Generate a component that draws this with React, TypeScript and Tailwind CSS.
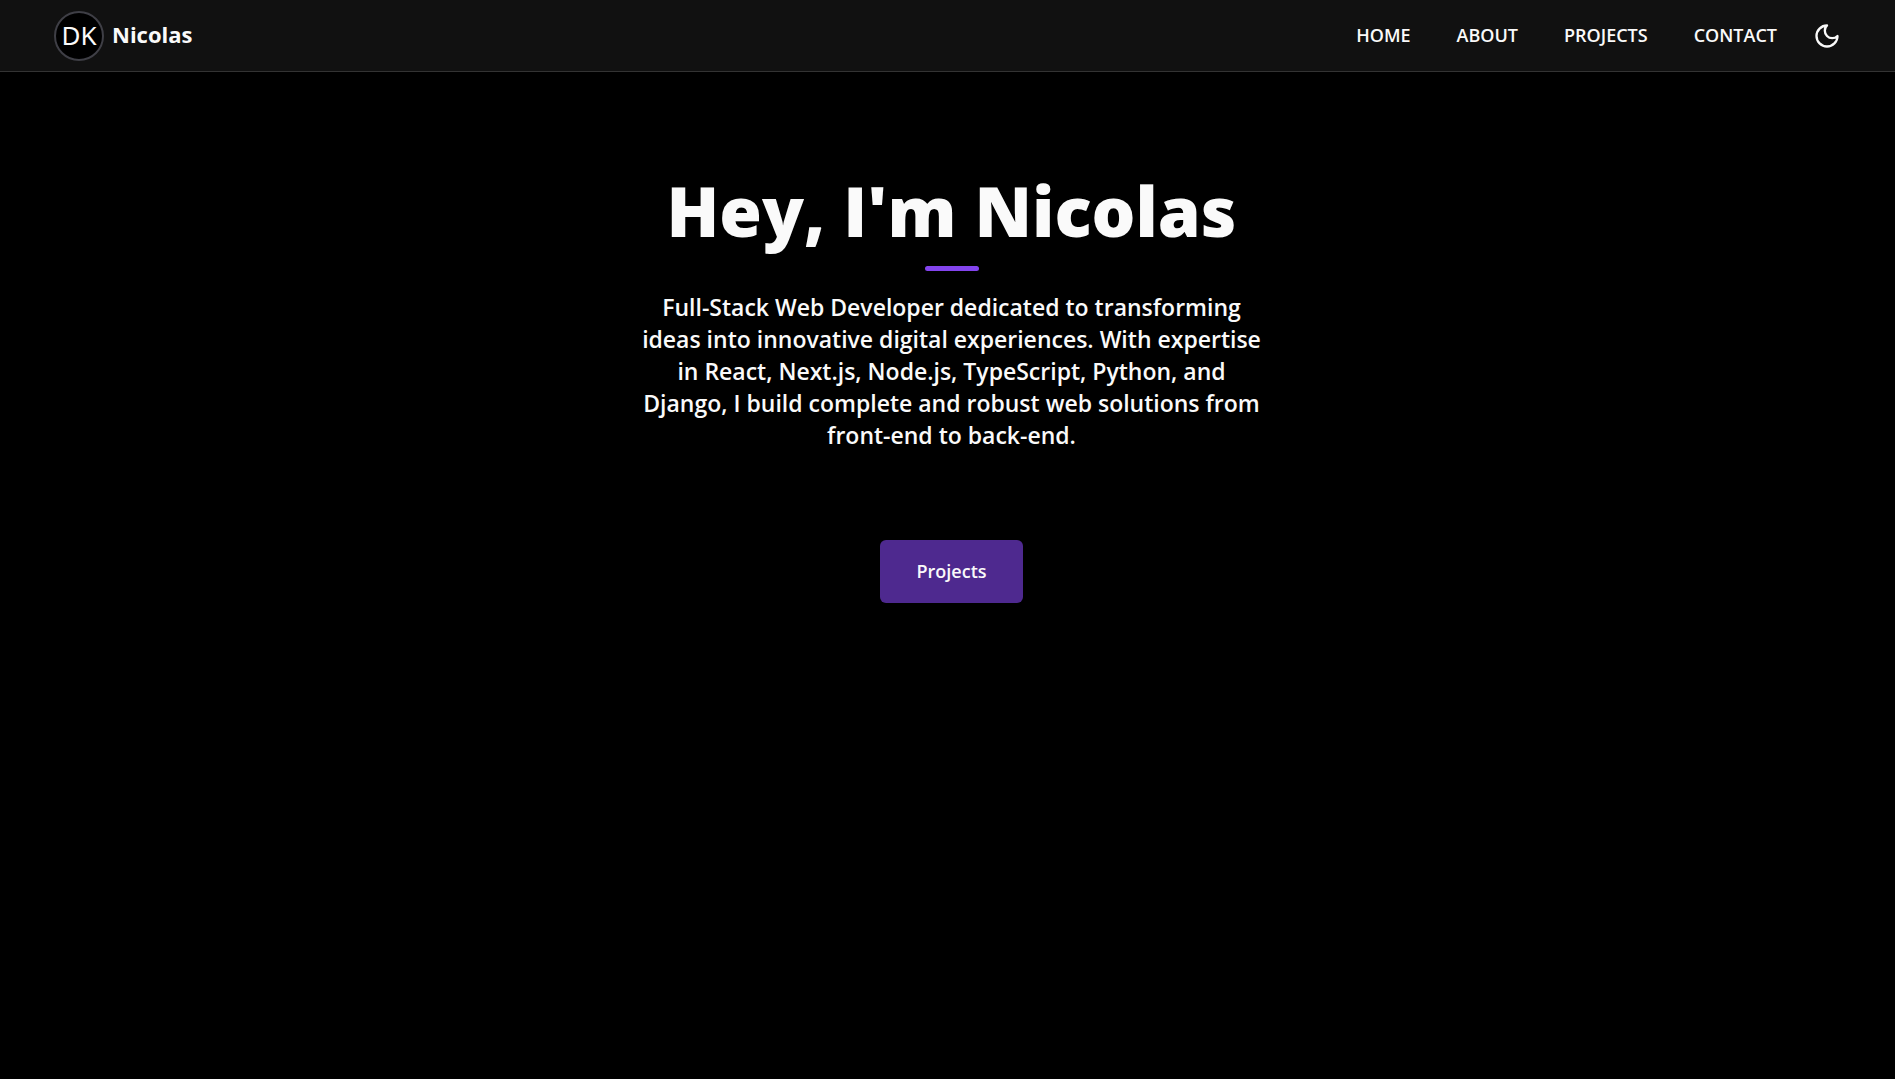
const links = ["Home", "About", "Projects", "Contact"];

function Moon() {
  return (
    <svg viewBox="0 0 24 24" className="size-7" fill="none" stroke="currentColor" strokeWidth="2" strokeLinecap="round" strokeLinejoin="round" aria-hidden="true">
      <path d="M12 3a6 6 0 0 0 9 9 9 9 0 1 1-9-9Z" />
    </svg>
  );
}

function Header() {
  return (
    <header className="flex h-18 items-center justify-between border-b border-[#333333] bg-[#111111] px-[54px]">
      <a href="#home" className="flex items-center gap-2">
        <span className="flex size-[50px] items-center justify-center rounded-full border-2 border-[#3f3f46] bg-black font-['Noto_Sans',sans-serif] text-[26px]">
          DK
        </span>
        <span className="pb-0.5 text-[22px] font-bold">Nicolas</span>
      </a>
      <div className="flex items-center gap-9">
        <nav className="flex gap-[46px] pb-0.5 text-lg font-semibold uppercase">
          {links.map((label) => (
            <a key={label} href={`#${label.toLowerCase()}`}>
              {label}
            </a>
          ))}
        </nav>
        <button type="button" aria-label="Toggle theme" className="block">
          <Moon />
        </button>
      </div>
    </header>
  );
}

export default function App() {
  return (
    <div className="min-h-screen bg-black font-['Open_Sans',sans-serif] text-[#fafafa]">
      <Header />
      <main className="flex flex-col items-center px-6 pt-[90px] pl-8 text-center">
        <h1 className="text-[69px] leading-[96px] font-extrabold">Hey, I'm Nicolas</h1>
        <div className="mt-2 h-[5px] w-[54px] rounded-full bg-[#8344ed]" />
        <p className="mt-5 max-w-[630px] text-[23px] leading-8 font-semibold">
          Full-Stack Web Developer dedicated to transforming ideas into innovative digital experiences. With expertise in React, Next.js, Node.js, TypeScript, Python, and Django, I build complete and robust web solutions from front-end to back-end.
        </p>
        <a href="#projects" className="mt-[89px] flex h-[63px] items-center rounded-md bg-[#4e298f] px-9 pb-0.5 text-lg font-semibold">
          Projects
        </a>
      </main>
    </div>
  );
}
